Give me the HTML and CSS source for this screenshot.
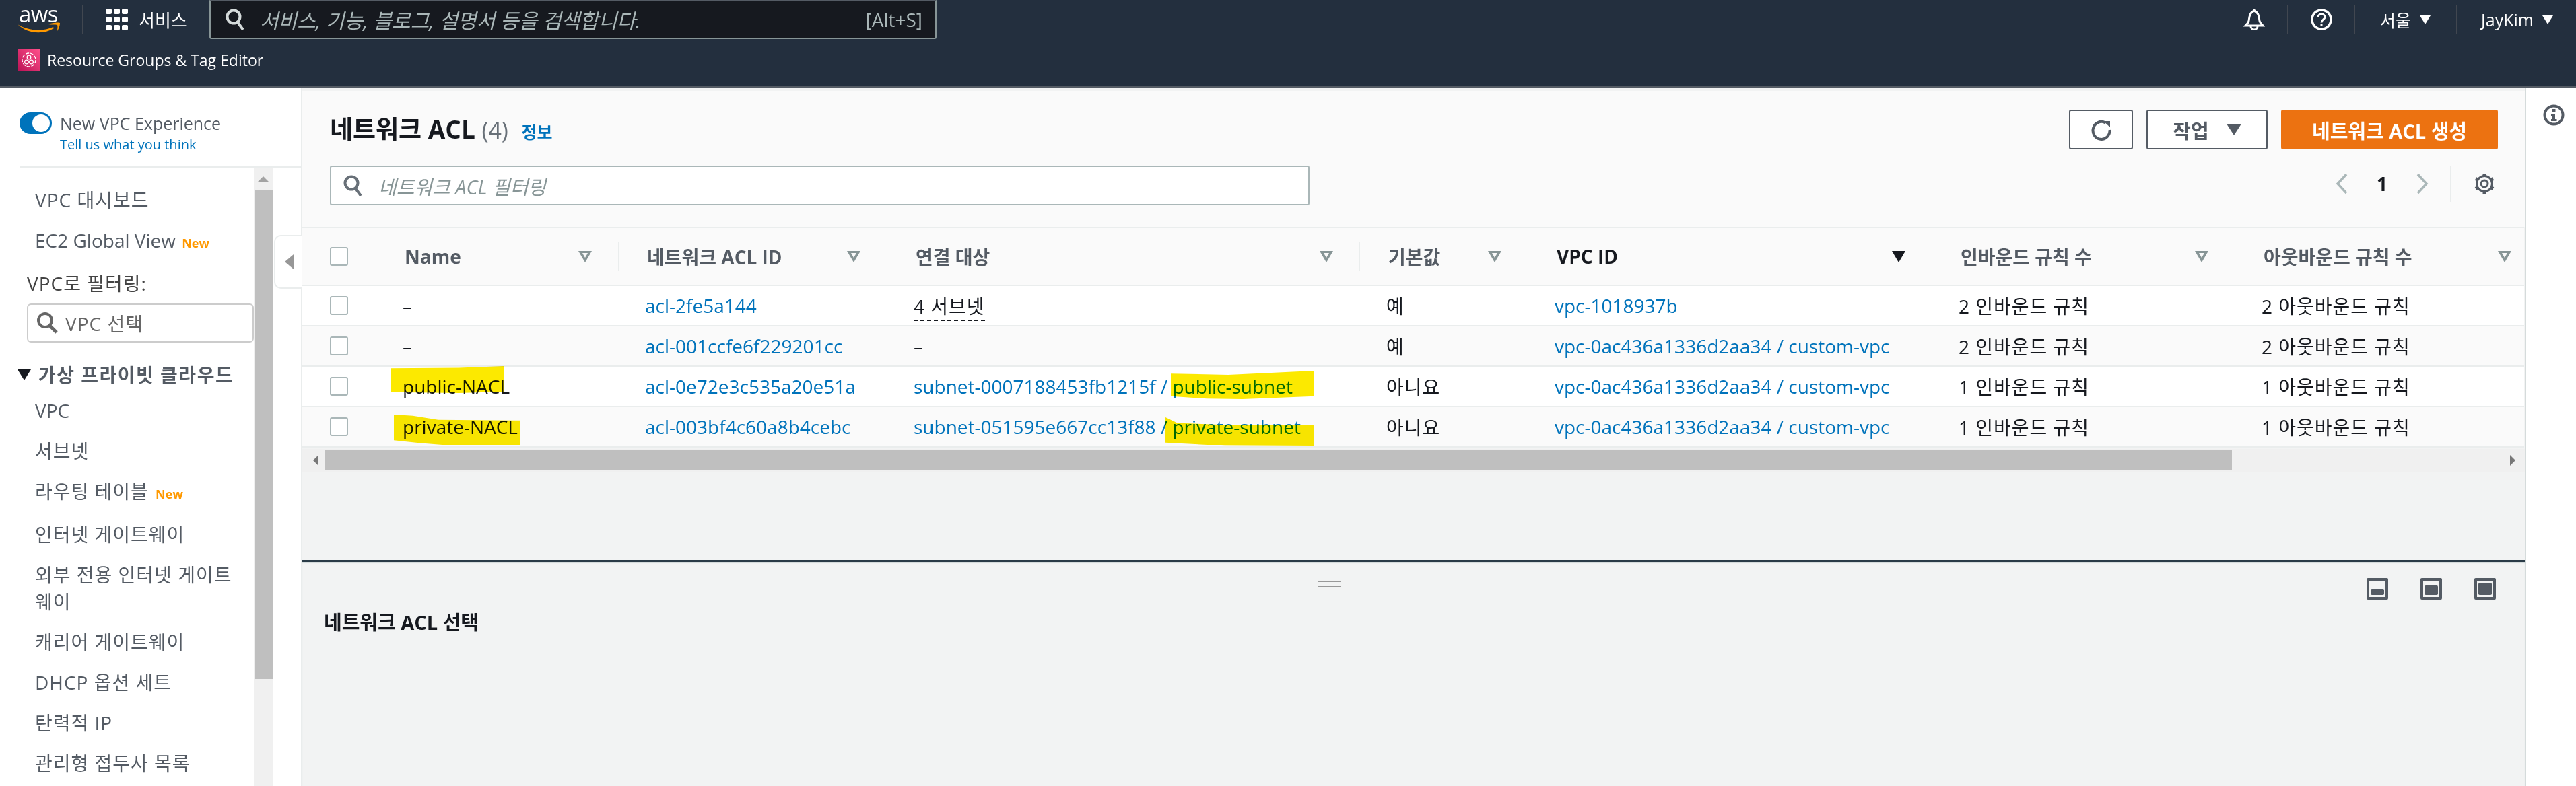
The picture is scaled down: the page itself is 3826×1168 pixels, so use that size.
FILE: index.html
```html
<!DOCTYPE html>
<html lang="ko">
<head>
    <title>네트워크 ACL</title>
    <meta name="viewport" content="width=device-width, initial-scale=1">
    <link rel="stylesheet" href="styles.css">
</head>
<body>
    <header class="topnav">
        <div class="topnav-main">
            <div class="aws-logo">
                <span class="aws-word">aws</span>
                <svg class="aws-smile" viewBox="0 0 63 16" fill="#f90">
                    <path d="M0 3 C14 12 36 15 53 7 L54 9 C38 19 14 17 0 3 Z"/>
                    <path d="M46 3 C51 1 59 0 63 1 C63 5 61 10 59 13 C59 9 60 6 59 4 C56 3 50 4 46 3 Z"/>
                </svg>
            </div>
            <span class="nav-sep nav-sep-logo"></span>
            <svg class="grid-icon" viewBox="0 0 33 32" fill="#fff">
                <rect x="0" y="0" width="9" height="8" rx="2"/><rect x="12" y="0" width="9" height="8" rx="2"/><rect x="24" y="0" width="9" height="8" rx="2"/>
                <rect x="0" y="12" width="9" height="8" rx="2"/><rect x="12" y="12" width="9" height="8" rx="2"/><rect x="24" y="12" width="9" height="8" rx="2"/>
                <rect x="0" y="24" width="9" height="8" rx="2"/><rect x="12" y="24" width="9" height="8" rx="2"/><rect x="24" y="24" width="9" height="8" rx="2"/>
            </svg>
            <span class="services">서비스</span>
            <div class="global-search">
                <svg class="search-icon" viewBox="0 0 28 32"><circle cx="12" cy="12" r="9.500" fill="none" stroke="#d5dbdb" stroke-width="4"/><path d="M18 20 L26 31" stroke="#d5dbdb" stroke-width="4"/></svg>
                <span class="global-placeholder">서비스, 기능, 블로그, 설명서 등을 검색합니다.</span>
                <span class="shortcut">[Alt+S]</span>
            </div>
            <div class="nav-right">
                <svg class="bell-icon" viewBox="0 0 32 32"><path d="M16 3 C9 6 9 12 8 18 C7.500 21 5 23 3 25 H29 C27 23 24.500 21 24 18 C23 12 23 6 16 3 Z" fill="none" stroke="#fff" stroke-width="3"/><path d="M11 26 A5 5 0 0 0 21 26" fill="none" stroke="#fff" stroke-width="3"/><path d="M16 0 V4" stroke="#fff" stroke-width="3"/></svg>
                <span class="nav-sep"></span>
                <svg class="help-icon" viewBox="0 0 32 32"><circle cx="16" cy="16" r="14" fill="none" stroke="#fff" stroke-width="3.500"/><path d="M11 12.500 C11 6.500 21 6.500 21 12.500 C21 16 16 16 16 20.500" fill="none" stroke="#fff" stroke-width="3"/><rect x="14.500" y="22.500" width="3" height="3" fill="#fff"/></svg>
                <span class="nav-sep"></span>
                <span class="nav-menu nav-menu-region">서울<i class="caret-white"></i></span>
                <span class="nav-sep"></span>
                <span class="nav-menu nav-menu-user">JayKim<i class="caret-white"></i></span>
            </div>
        </div>
        <div class="topnav-sub">
            <svg class="rg-icon" viewBox="0 0 32 32">
                <defs><linearGradient id="rg" x1="1" y1="0" x2="0" y2="1"><stop offset="0" stop-color="#ff4f8b"/><stop offset="1" stop-color="#bc1356"/></linearGradient></defs>
                <rect width="32" height="32" fill="url(#rg)"/>
                <circle cx="16" cy="16" r="10" fill="none" stroke="#fff" stroke-width="1.300" stroke-dasharray="5 2"/>
                <circle cx="16" cy="12" r="2.800" fill="none" stroke="#fff" stroke-width="1.300"/>
                <circle cx="12.500" cy="19" r="2.800" fill="none" stroke="#fff" stroke-width="1.300"/>
                <circle cx="19.500" cy="19" r="2.800" fill="none" stroke="#fff" stroke-width="1.300"/>
            </svg>
            <span class="rg-label">Resource Groups &amp; Tag Editor</span>
        </div>
    </header>

    <div class="main">
        <aside class="sidebar">
            <div class="experience">
                <span class="toggle"><i class="toggle-knob"></i></span>
                <div class="experience-text">
                    <div class="experience-title">New VPC Experience</div>
                    <a class="experience-link">Tell us what you think</a>
                </div>
            </div>
            <div class="sidebar-body">
                <nav class="side-nav">
                    <a class="side-link ko">VPC 대시보드</a>
                    <a class="side-link">EC2 Global View <b class="new-tag">New</b></a>
                    <div class="vpc-filter-label ko">VPC로 필터링:</div>
                    <div class="vpc-filter">
                        <svg class="vpc-filter-icon" viewBox="0 0 34 34"><circle cx="14" cy="13" r="10" fill="none" stroke="#666" stroke-width="4"/><path d="M21 21 L31 31" stroke="#666" stroke-width="5"/></svg>
                        <span class="ko">VPC 선택</span>
                    </div>
                    <div class="side-group"><i class="group-caret"></i>가상 프라이빗 클라우드</div>
                    <a class="side-link">VPC</a>
                    <a class="side-link ko">서브넷</a>
                    <a class="side-link ko">라우팅 테이블 <b class="new-tag">New</b></a>
                    <a class="side-link ko">인터넷 게이트웨이</a>
                    <a class="side-link ko">외부 전용 인터넷 게이트웨이</a>
                    <a class="side-link ko">캐리어 게이트웨이</a>
                    <a class="side-link ko">DHCP 옵션 세트</a>
                    <a class="side-link ko">탄력적 IP</a>
                    <a class="side-link ko">관리형 접두사 목록</a>
                </nav>
                <div class="side-scroll">
                    <i class="side-scroll-up"></i>
                    <div class="side-scroll-thumb"></div>
                </div>
            </div>
            <div class="collapse-handle"><i></i></div>
        </aside>

        <section class="content">
            <div class="list-panel">
                <div class="list-head">
                    <h1 class="list-title">네트워크 ACL <span class="list-count">(4)</span> <a class="info-link">정보</a></h1>
                    <div class="list-actions">
                        <button class="btn btn-icon"><svg viewBox="0 0 32 32" class="refresh-icon"><path d="M22 5.500 A12.500 13 0 1 0 28.500 16" fill="none" stroke="#545b64" stroke-width="4"/><path d="M19 3 H29 V12 Z" fill="#545b64"/></svg></button>
                        <button class="btn btn-actions">작업<i class="caret-dark"></i></button>
                        <button class="btn btn-primary">네트워크 ACL 생성</button>
                    </div>
                </div>
                <div class="list-tools">
                    <div class="filter-box">
                        <svg class="filter-icon" viewBox="0 0 28 32"><circle cx="12" cy="12" r="9.500" fill="none" stroke="#687078" stroke-width="4"/><path d="M18 20 L26 31" stroke="#687078" stroke-width="4"/></svg>
                        <span class="filter-placeholder">네트워크 ACL 필터링</span>
                    </div>
                    <div class="pager">
                        <svg class="chevron" viewBox="0 0 18 30"><path d="M16 1 L3 15 L16 29" fill="none" stroke="#aab7b8" stroke-width="3.500"/></svg>
                        <span class="pager-num">1</span>
                        <svg class="chevron" viewBox="0 0 18 30"><path d="M2 1 L15 15 L2 29" fill="none" stroke="#aab7b8" stroke-width="3.500"/></svg>
                        <span class="pager-sep"></span>
                        <svg class="gear-icon" viewBox="0 0 32 32"><circle cx="16" cy="16" r="5" fill="none" stroke="#545b64" stroke-width="3"/><circle cx="16" cy="16" r="11.500" fill="none" stroke="#545b64" stroke-width="3"/><path d="M16 1 V6 M16 26 V31 M3 8.500 L7.300 11 M24.700 21 L29 23.500 M3 23.500 L7.300 21 M24.700 11 L29 8.500" stroke="#545b64" stroke-width="5"/></svg>
                    </div>
                </div>
            </div>

            <table class="acl-table">
                <colgroup>
                    <col class="col-check"><col class="col-name"><col class="col-id"><col class="col-assoc"><col class="col-default"><col class="col-vpc"><col class="col-in"><col class="col-out">
                </colgroup>
                <thead>
                    <tr>
                        <th><span class="check"></span></th>
                        <th><div class="th-in">Name<i class="sort-icon"></i></div></th>
                        <th><div class="th-in">네트워크 ACL ID<i class="sort-icon"></i></div></th>
                        <th><div class="th-in">연결 대상<i class="sort-icon"></i></div></th>
                        <th><div class="th-in">기본값<i class="sort-icon"></i></div></th>
                        <th><div class="th-in th-active">VPC ID<i class="sort-icon sort-active"></i></div></th>
                        <th><div class="th-in">인바운드 규칙 수<i class="sort-icon"></i></div></th>
                        <th><div class="th-in th-last">아웃바운드 규칙 수<i class="sort-icon"></i></div></th>
                    </tr>
                </thead>
                <tbody>
                    <tr>
                        <td><span class="check"></span></td>
                        <td>–</td>
                        <td><a>acl-2fe5a144</a></td>
                        <td><span class="dotted ko">4 서브넷</span></td>
                        <td>예</td>
                        <td><a>vpc-1018937b</a></td>
                        <td class="ko">2 인바운드 규칙</td>
                        <td class="ko">2 아웃바운드 규칙</td>
                    </tr>
                    <tr>
                        <td><span class="check"></span></td>
                        <td>–</td>
                        <td><a>acl-001ccfe6f229201cc</a></td>
                        <td>–</td>
                        <td>예</td>
                        <td><a>vpc-0ac436a1336d2aa34 / custom-vpc</a></td>
                        <td class="ko">2 인바운드 규칙</td>
                        <td class="ko">2 아웃바운드 규칙</td>
                    </tr>
                    <tr>
                        <td><span class="check"></span></td>
                        <td>public-NACL</td>
                        <td><a>acl-0e72e3c535a20e51a</a></td>
                        <td><a>subnet-0007188453fb1215f / public-subnet</a></td>
                        <td class="ko">아니요</td>
                        <td><a>vpc-0ac436a1336d2aa34 / custom-vpc</a></td>
                        <td class="ko">1 인바운드 규칙</td>
                        <td class="ko">1 아웃바운드 규칙</td>
                    </tr>
                    <tr>
                        <td><span class="check"></span></td>
                        <td>private-NACL</td>
                        <td><a>acl-003bf4c60a8b4cebc</a></td>
                        <td><a>subnet-051595e667cc13f88 / private-subnet</a></td>
                        <td class="ko">아니요</td>
                        <td><a>vpc-0ac436a1336d2aa34 / custom-vpc</a></td>
                        <td class="ko">1 인바운드 규칙</td>
                        <td class="ko">1 아웃바운드 규칙</td>
                    </tr>
                </tbody>
            </table>

            <div class="hscroll">
                <i class="hscroll-left"></i>
                <div class="hscroll-thumb"></div>
                <i class="hscroll-right"></i>
            </div>

            <div class="split">
                <div class="split-handle"></div>
                <div class="split-body">
                    <h2 class="split-title">네트워크 ACL 선택</h2>
                    <div class="split-icons">
                        <span class="pane-icon"><i class="pane-min"></i></span>
                        <span class="pane-icon"><i class="pane-mid"></i></span>
                        <span class="pane-icon"><i class="pane-max"></i></span>
                    </div>
                </div>
            </div>
        </section>

        <aside class="rail">
            <svg class="rail-info" viewBox="0 0 32 32"><circle cx="16" cy="16" r="13.500" fill="none" stroke="#545b64" stroke-width="4"/><rect x="13.500" y="7" width="5" height="4" fill="#545b64"/><path d="M12 14 H18 V22 H20.500 V25 H12 V22 H14 V17 H12 Z" fill="#545b64"/></svg>
        </aside>
    </div>

    <!-- marker strokes drawn over the screenshot -->
    <i class="marker marker-name1"></i>
    <i class="marker marker-name2"></i>
    <i class="marker marker-subnet1"></i>
    <i class="marker marker-subnet2"></i>
</body>
</html>
```

FILE: styles.css
```css
* {
    box-sizing: border-box;
}
html, body {
    margin: 0;
    height: 100%;
}
body {
    position: relative;
    overflow: hidden;
    font-family: "Open Sans", "Noto Sans CJK KR", sans-serif;
    font-size: 28px;
    color: #16191f;
    background: #fff;
}
a {
    color: #0073bb;
    text-decoration: none;
}
i {
    display: block;
}
.ko {
    letter-spacing: 1px;
}

/* top navigation */
.topnav {
    height: 131px;
    background: #232f3e;
    border-bottom: 3px solid #545b64;
    color: #fff;
}
.topnav-main {
    height: 58px;
    display: flex;
    align-items: center;
    padding-left: 26px;
}
.aws-logo {
    width: 62px;
    height: 40px;
    display: flex;
    flex-direction: column;
    align-items: center;
}
.aws-word {
    font-size: 33px;
    line-height: 24px;
    height: 24px;
    letter-spacing: -.5px;
}
.aws-smile {
    width: 63px;
    height: 16px;
    flex: none;
}
.nav-sep {
    width: 1px;
    height: 44px;
    background: #414750;
    flex: none;
}
.nav-sep-logo {
    margin: 0 34px;
}
.grid-icon {
    width: 33px;
    height: 32px;
}
.services {
    margin-left: 16px;
    font-size: 26px;
    width: 105px;
}
.global-search {
    width: 1080px;
    height: 58px;
    background: #16191f;
    border: 2px solid #879596;
    border-top-color: #545b64;
    border-radius: 0 0 3px 3px;
    display: flex;
    align-items: center;
    padding: 0 19px 0 22px;
}
.search-icon {
    width: 28px;
    height: 32px;
}
.global-placeholder {
    margin-left: 23px;
    font-style: italic;
    font-size: 30px;
    color: #aab7b8;
    flex: 1;
}
.shortcut {
    font-size: 28px;
    color: #aab7b8;
}
.nav-right {
    margin-left: auto;
    display: flex;
    align-items: center;
    height: 100%;
}
.bell-icon {
    width: 32px;
    height: 32px;
    margin-right: 33px;
}
.help-icon {
    width: 32px;
    height: 32px;
    margin: 0 33px 0 34px;
}
.nav-menu {
    display: flex;
    align-items: center;
    font-size: 25px;
}
.nav-menu-region {
    padding: 0 38px 0 37px;
}
.nav-menu-user {
    padding: 0 34px 0 36px;
}
.caret-white {
    width: 0;
    height: 0;
    margin-left: 13px;
    border-left: 8px solid transparent;
    border-right: 8px solid transparent;
    border-top: 13px solid #fff;
}
.topnav-sub {
    height: 70px;
    display: flex;
    align-items: center;
    padding: 0 0 8px 27px;
}
.rg-icon {
    width: 32px;
    height: 32px;
}
.rg-label {
    margin-left: 11px;
    font-size: 23px;
}

/* page frame */
.main {
    height: 1037px;
    display: flex;
}
.sidebar {
    position: relative;
    width: 449px;
    flex: none;
    border-right: 2px solid #eaeded;
}
.rail {
    flex: 1;
    padding: 24px 0 0 25px;
    border-left: 2px solid #d5dbdb;
}
.rail-info {
    width: 32px;
    height: 32px;
    display: block;
}
.content {
    width: 3301px;
    flex: none;
    display: flex;
    flex-direction: column;
    background: #f2f3f3;
    padding-top: 4px;
}

/* sidebar */
.experience {
    height: 118px;
    margin-left: 29px;
    padding-top: 36px;
    display: flex;
    border-bottom: 3px solid #eaeded;
}
.toggle {
    width: 48px;
    height: 32px;
    border-radius: 16px;
    background: #0073bb;
    padding: 3px;
    display: flex;
    justify-content: flex-end;
    flex: none;
}
.toggle-knob {
    width: 26px;
    height: 26px;
    border-radius: 50%;
    background: #fff;
}
.experience-text {
    margin-left: 12px;
}
.experience-title {
    font-size: 25px;
    line-height: 32px;
    color: #545b64;
}
.experience-link {
    display: block;
    font-size: 20px;
    line-height: 30px;
    margin-top: 1px;
}
.sidebar-body {
    display: flex;
    height: 919px;
}
.side-nav {
    width: 377px;
    flex: none;
    padding-top: 18px;
}
.side-link {
    display: block;
    padding: 10px 10px 10px 52px;
    line-height: 40px;
    color: #545b64;
}
.new-tag {
    font-size: 18px;
    letter-spacing: 0;
    color: #ff9900;
    margin-left: 2px;
}
.vpc-filter-label {
    margin-left: 40px;
    line-height: 60px;
    color: #444;
}
.vpc-filter {
    margin-left: 40px;
    height: 58px;
    width: 337px;
    border: 2px solid #ccc;
    border-radius: 6px;
    display: flex;
    align-items: center;
    padding-left: 11px;
    color: #666;
}
.vpc-filter-icon {
    width: 34px;
    height: 34px;
    margin-right: 10px;
}
.side-group {
    margin-top: 25px;
    display: flex;
    align-items: center;
    padding-left: 26px;
    line-height: 46px;
    font-weight: 700;
    letter-spacing: 1.500px;
    color: #545b64;
}
.group-caret {
    width: 0;
    height: 0;
    border-left: 10px solid transparent;
    border-right: 10px solid transparent;
    border-top: 16px solid #16191f;
    margin-right: 11px;
}
.side-scroll {
    width: 28px;
    flex: none;
    background: #f0f0f0;
    padding-top: 13px;
}
.side-scroll-up {
    width: 0;
    height: 0;
    margin: 0 auto;
    border-left: 8px solid transparent;
    border-right: 8px solid transparent;
    border-bottom: 8px solid #a3a3a3;
}
.side-scroll-thumb {
    margin: 13px 0 0 2px;
    height: 726px;
    background: #bfbfbf;
}
.collapse-handle {
    position: absolute;
    left: 407px;
    top: 218px;
    width: 42px;
    height: 80px;
    background: #fff;
    border: 2px solid #eaeded;
    border-right: none;
    border-radius: 10px 0 0 10px;
    display: flex;
    align-items: center;
    padding-left: 14px;
}
.collapse-handle i {
    width: 0;
    height: 0;
    border-top: 11px solid transparent;
    border-bottom: 11px solid transparent;
    border-right: 13px solid #979797;
}

/* list header */
.list-panel {
    background: #fafafa;
    height: 202px;
    padding: 0 40px 0 41px;
}
.list-head {
    height: 111px;
    display: flex;
    justify-content: space-between;
    padding-top: 28px;
}
.list-title {
    margin: -1px 0 0;
    font-size: 37px;
    line-height: 60px;
    font-weight: 700;
}
.list-count {
    font-weight: 400;
    font-size: 34px;
    color: #687078;
}
.info-link {
    font-size: 25px;
    margin-left: 10px;
}
.list-actions {
    display: flex;
    gap: 20px;
}
.btn {
    height: 59px;
    border-radius: 3px;
    border: 2px solid #545b64;
    background: #fff;
    color: #545b64;
    font: 700 29px "Open Sans", "Noto Sans CJK KR", sans-serif;
    display: flex;
    align-items: center;
    justify-content: center;
    padding: 0;
}
.btn-icon {
    width: 95px;
}
.refresh-icon {
    width: 32px;
    height: 32px;
}
.btn-actions {
    width: 180px;
}
.caret-dark {
    width: 0;
    height: 0;
    margin-left: 26px;
    border-left: 11px solid transparent;
    border-right: 11px solid transparent;
    border-top: 17px solid #545b64;
}
.btn-primary {
    width: 322px;
    background: #ec7211;
    border-color: #ec7211;
    color: #fff;
}
.list-tools {
    display: flex;
    justify-content: space-between;
    align-items: flex-start;
}
.filter-box {
    width: 1455px;
    height: 59px;
    background: #fff;
    border: 2px solid #aab7b8;
    border-radius: 3px;
    display: flex;
    align-items: center;
    padding-left: 18px;
}
.filter-icon {
    width: 28px;
    height: 32px;
}
.filter-placeholder {
    margin-left: 24px;
    font-size: 29px;
    font-style: italic;
    color: #879596;
}
.pager {
    display: flex;
    align-items: center;
    height: 54px;
    margin-right: 4px;
}
.chevron {
    width: 18px;
    height: 30px;
}
.pager-num {
    width: 102px;
    text-align: center;
    font-weight: 700;
}
.pager-sep {
    width: 1px;
    height: 54px;
    background: #eaeded;
    margin: 0 34px 0 32px;
}
.gear-icon {
    width: 32px;
    height: 32px;
}

/* table */
.acl-table {
    width: 3300px;
    table-layout: fixed;
    border-collapse: collapse;
    background: #fff;
    border-top: 2px solid #eaeded;
}
.col-check { width: 109px; }
.col-name { width: 360px; }
.col-id { width: 399px; }
.col-assoc { width: 702px; }
.col-default { width: 250px; }
.col-vpc { width: 600px; }
.col-in { width: 450px; }
.col-out { width: 430px; }
.acl-table th {
    height: 86px;
    padding: 0;
    background: #fafafa;
    text-align: left;
    font-weight: 700;
    color: #545b64;
    border-bottom: 2px solid #eaeded;
}
.acl-table th:first-child,
.acl-table td:first-child {
    padding-left: 41px;
}
.th-in {
    height: 42px;
    display: flex;
    align-items: center;
    justify-content: space-between;
    border-left: 1px solid #eaeded;
    padding: 0 39px 0 42px;
}
.th-last {
    padding-right: 19px;
}
.th-active {
    color: #16191f;
}
.sort-icon {
    position: relative;
    width: 0;
    height: 0;
    border-left: 10px solid transparent;
    border-right: 10px solid transparent;
    border-top: 17px solid #879596;
    flex: none;
}
.sort-icon::after {
    content: "";
    position: absolute;
    left: -4px;
    top: -14px;
    border-left: 4px solid transparent;
    border-right: 4px solid transparent;
    border-top: 7px solid #fafafa;
}
.sort-active {
    border-top-color: #16191f;
}
.sort-active::after {
    display: none;
}
.acl-table td {
    height: 60px;
    padding: 0 0 0 40px;
    white-space: nowrap;
    border-bottom: 2px solid #eaeded;
}
.acl-table tbody tr:nth-child(even) td {
    background: #fafafa;
}
.check {
    display: block;
    width: 27px;
    height: 28px;
    background: #fff;
    border: 2px solid #aab7b8;
    border-radius: 3px;
}
.dotted {
    border-bottom: 2px dashed #16191f;
    padding-bottom: 1px;
}

/* horizontal scroll */
.hscroll {
    height: 34px;
    margin-top: 2px;
    background: #f0f0f0;
    display: flex;
    align-items: center;
    padding: 2px 14px 2px 16px;
}
.hscroll-left {
    width: 0;
    height: 0;
    border-top: 8px solid transparent;
    border-bottom: 8px solid transparent;
    border-right: 8px solid #787878;
}
.hscroll-thumb {
    width: 2832px;
    height: 30px;
    margin-left: 10px;
    background: #bfbfbf;
}
.hscroll-right {
    margin-left: auto;
    width: 0;
    height: 0;
    border-top: 8px solid transparent;
    border-bottom: 8px solid transparent;
    border-left: 8px solid #787878;
}

/* split panel */
.split {
    margin-top: 131px;
    flex: 1;
    border-top: 3px solid #2a3b47;
    box-shadow: inset 0 2px 1px #d5dbdb;
    position: relative;
}
.split-handle {
    position: absolute;
    left: 1509px;
    top: 28px;
    width: 34px;
    height: 10px;
    border-top: 2px solid #999;
    border-bottom: 2px solid #999;
}
.split-body {
    display: flex;
    justify-content: space-between;
    align-items: flex-start;
    padding: 24px 43px 0 32px;
}
.split-title {
    margin: 48px 0 0;
    font-size: 29px;
    line-height: 36px;
    font-weight: 700;
}
.split-icons {
    display: flex;
    gap: 48px;
}
.pane-icon {
    width: 32px;
    height: 32px;
    border: 4px solid #545b64;
    border-radius: 2px;
    display: flex;
    align-items: flex-end;
    padding: 3px 2px;
}
.pane-icon i {
    flex: 1;
    background: #545b64;
    border-radius: 2px;
}
.pane-min { height: 9px; }
.pane-mid { height: 14px; }
.pane-max { height: 18px; }

/* yellow marker strokes */
.marker {
    position: absolute;
    background: #fce900;
    mix-blend-mode: multiply;
}
.marker-name1 {
    left: 580px;
    top: 544px;
    width: 169px;
    height: 40px;
    clip-path: polygon(0 8%, 60% 6%, 100% 0, 100% 95%, 60% 100%, 0 97%);
}
.marker-name2 {
    left: 585px;
    top: 616px;
    width: 188px;
    height: 46px;
    clip-path: polygon(0 0, 15% 4%, 35% 17%, 100% 19%, 100% 100%, 45% 100%, 20% 92%, 0 83%);
}
.marker-subnet1 {
    left: 1739px;
    top: 551px;
    width: 213px;
    height: 42px;
    clip-path: polygon(0 10%, 40% 14%, 70% 7%, 100% 0, 100% 90%, 50% 100%, 25% 98%, 0 90%);
}
.marker-subnet2 {
    left: 1731px;
    top: 620px;
    width: 220px;
    height: 43px;
    clip-path: polygon(0 0, 8% 20%, 40% 26%, 100% 26%, 100% 100%, 40% 98%, 0 88%);
}
```
